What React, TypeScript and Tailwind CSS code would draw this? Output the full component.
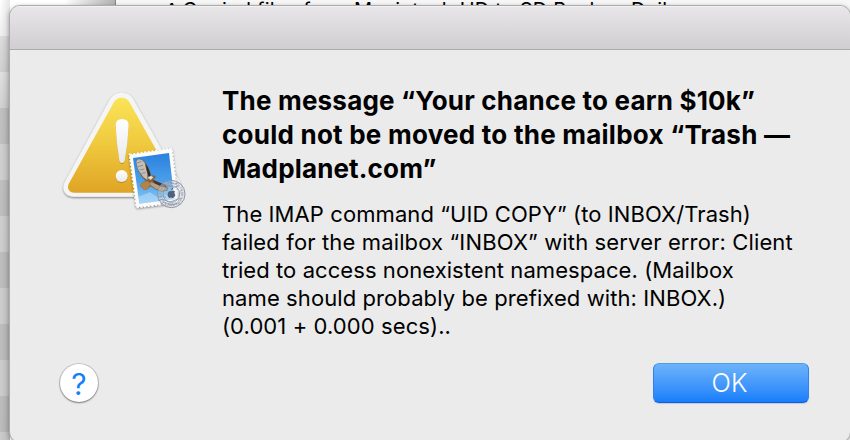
import React from "react";

const TITLE = [
  { text: "The message “Your chance to earn $10k”", cls: "tracking-[0.2px]" },
  { text: "could not be moved to the mailbox “Trash —", cls: "tracking-[0.24px]" },
  { text: "Madplanet.com”", cls: "tracking-[0.15px]" },
];

const BODY = [
  { text: "The IMAP command “UID COPY” (to INBOX/Trash)", cls: "tracking-[0.09px]" },
  { text: "failed for the mailbox “INBOX” with server error: Client", cls: "tracking-[0.14px]" },
  { text: "tried to access nonexistent namespace. (Mailbox", cls: "tracking-[0.07px]" },
  { text: "name should probably be prefixed with: INBOX.)", cls: "tracking-[0.09px]" },
  { text: "(0.001 + 0.000 secs)..", cls: "tracking-[0.09px]" },
];

function WarningIcon() {
  return (
    <svg width="150" height="140" viewBox="0 0 450 420" className="block">
      <defs>
        <linearGradient id="gold" x1="0" y1="0" x2="0" y2="1">
          <stop offset="0" stopColor="#fbe457" />
          <stop offset="0.5" stopColor="#efc83d" />
          <stop offset="1" stopColor="#dfa425" />
        </linearGradient>
        <linearGradient id="mark" x1="0" y1="0" x2="0" y2="1">
          <stop offset="0" stopColor="#ffffff" />
          <stop offset="1" stopColor="#e9e9e9" />
        </linearGradient>
        <linearGradient id="sky" x1="0" y1="0" x2="0" y2="1">
          <stop offset="0" stopColor="#2a80dd" />
          <stop offset="0.55" stopColor="#4a9fea" />
          <stop offset="1" stopColor="#8ccaf5" />
        </linearGradient>
        <filter id="soft" x="-20%" y="-20%" width="140%" height="140%">
          <feDropShadow dx="0" dy="3" stdDeviation="3" floodColor="#000" floodOpacity="0.5" />
        </filter>
        <filter id="thin" x="-30%" y="-30%" width="160%" height="160%">
          <feDropShadow dx="0" dy="2" stdDeviation="1.5" floodColor="#7a5200" floodOpacity="0.6" />
        </filter>
      </defs>
      <path
        filter="url(#soft)"
        fill="#f5f5f5"
        d="M181 56Q193 38 215 38Q237 38 249 56L390 306Q398 324 388 338Q378 350 360 350H72Q52 350 44 336Q36 322 46 304Z"
      />
      <path
        fill="url(#gold)"
        d="M192 66Q200 53 215 53Q230 53 238 66L374 308Q380 320 375 329Q370 338 358 338H73Q61 338 56 329Q51 320 58 308Z"
      />
      <g filter="url(#thin)" fill="url(#mark)">
        <path d="M197 136Q197 117 216 117Q236 117 236 136Q234 190 224 242Q222 249 216 249Q210 249 208 242Q199 190 197 136Z" />
        <circle cx="215" cy="288" r="18" />
      </g>
      <g filter="url(#soft)">
        <path d="M239 224L365 206L384 366L260 382Z" fill="#fbfbfb" />
        <path
          d="M239 224L365 206L384 366L260 382Z"
          fill="none"
          stroke="#fbfbfb"
          strokeWidth="6"
          strokeDasharray="6 5"
        />
      </g>
      <path d="M249 234L357 219L373 357L268 371Z" fill="url(#sky)" />
      <path d="M266 350L300 337L323 352L347 345L372 352L373 357L268 371Z" fill="#b5dcf7" opacity="0.6" />
      <path
        d="M258 243L266 237L276 239L286 246L293 260L299 272L302 287L313 286L318 291L313 296L309 298L326 307L345 314L355 324L353 332L337 335L318 329L302 319L293 327L284 331L270 317L275 309L287 304L276 291L264 273L260 257Z"
        fill="#7d6548"
      />
      <path d="M259 243L266 238L276 240L284 248L287 262L292 280L292 300L280 291L266 272L261 257Z" fill="#c2bfba" />
      <path d="M262 249L274 244M263 260L279 256M268 270L283 267M274 280L287 278" stroke="#77726e" strokeWidth="2" fill="none" />
      <path d="M287 252L294 262L301 280L302 290L295 288L290 270Z" fill="#3c2c20" />
      <path d="M270 316L276 309L293 303L303 312L293 326L284 331Z" fill="#b58249" />
      <path d="M302 306L323 314L343 320L351 328L335 332L317 326L302 315Z" fill="#b3a086" />
      <path d="M307 299L326 307L348 316L352 323L335 320L314 310Z" fill="#4a3727" />
      <path d="M293 293L303 287L310 292L302 300Z" fill="#e8dcc8" />
      <g fill="none" stroke="#8b95a8">
        <circle cx="364" cy="342" r="41" strokeWidth="3" fill="#dfe3ea" fillOpacity="0.3" />
        <circle cx="364" cy="342" r="25" strokeWidth="2.5" />
        <circle cx="364" cy="342" r="33" strokeWidth="7" strokeDasharray="7 3 3 4 5 3" opacity="0.5" />
        <path
          d="M338 308Q350 300 362 308T386 308M334 318Q346 310 358 318T384 318M325 352Q336 344 348 352M325 362Q336 354 348 362T372 362T396 356M332 371Q344 363 356 371T382 369"
          strokeWidth="2.5"
        />
      </g>
      <path
        d="M364 334Q369 330 375 334Q370 340 376 346Q372 355 367 354Q363 351 359 354Q352 351 353 341Q355 331 364 334ZM363 331Q363 325 370 322Q370 329 363 331Z"
        fill="#52617b"
      />
    </svg>
  );
}

export default function App() {
  return (
    <div className="relative h-[440px] w-[850px] overflow-hidden bg-[#f7f7f7] font-['Inter','Liberation_Sans',sans-serif] text-black">
      <div className="flex h-full">
        <div className="relative w-[116px] shrink-0 border-r border-[#858585] bg-[repeating-linear-gradient(to_bottom,#ffffff_0px,#ffffff_36px,#ececec_36px,#ececec_72px)]">
          <div className="absolute inset-y-0 right-0 w-[50px] bg-linear-to-r from-transparent to-black/30" />
        </div>
        <div className="-mt-[2px] h-6 pl-[51px] text-[20px] leading-6 whitespace-pre tracking-[0.2px]">
          ^ Copied files from Macintosh HD to SD Backup Daily
        </div>
      </div>
      <div className="absolute inset-y-0 left-0 w-[10px] bg-linear-to-b from-transparent via-black/18 via-25% to-black/20" />
      <div className="absolute inset-y-0 left-0 w-[10px] bg-linear-to-r from-transparent to-black/10" />

      <div className="absolute top-[5px] left-[9px] flex h-[438px] w-[842px] flex-col overflow-hidden rounded-[11px] border border-[#acacac] bg-[#ebebeb] shadow-[0_1px_4px_rgba(0,0,0,0.3)]">
        <div className="h-[44px] shrink-0 border-t border-b border-t-[#f3f1f4] border-b-[#acaaac] bg-linear-to-b from-[#e9e6ea] to-[#d0ced1]" />
        <div className="flex">
          <div className="mt-[30px] ml-[40px] h-[140px] w-[150px] shrink-0">
            <WarningIcon />
          </div>
          <div className="ml-[22px] pt-[34px]">
            <h1 className="text-[26px] leading-[34px] font-bold whitespace-nowrap">
              {TITLE.map((l) => (
                <div key={l.text}>
                  <span className={l.cls}>{l.text}</span>
                </div>
              ))}
            </h1>
            <div className="mt-[14px] text-[22px] leading-[28px] whitespace-nowrap">
              {BODY.map((l) => (
                <div key={l.text}>
                  <span className={l.cls}>{l.text}</span>
                </div>
              ))}
            </div>
          </div>
        </div>
        <div className="mt-[23px] flex items-start justify-between pr-[41px] pl-[50px]">
          <button className="mt-[1px] flex h-[38px] w-[38px] items-center justify-center rounded-full bg-white pt-[1px] text-[30px] leading-none text-[#147efb] shadow-[0_0_0_1px_rgba(0,0,0,0.14),0_1px_2px_rgba(0,0,0,0.4)]">
            ?
          </button>
          <button className="h-[40px] w-[156px] rounded-[6px] border border-t-[#4f9de9] border-x-[#2f83f0] border-b-[#0a5df0] bg-linear-to-b from-[#6cb3fa] to-[#157efb] pr-[3px] text-[25.5px] leading-[38px] font-light text-white shadow-[0_1px_1px_rgba(0,0,0,0.15)]">
            OK
          </button>
        </div>
      </div>
    </div>
  );
}
